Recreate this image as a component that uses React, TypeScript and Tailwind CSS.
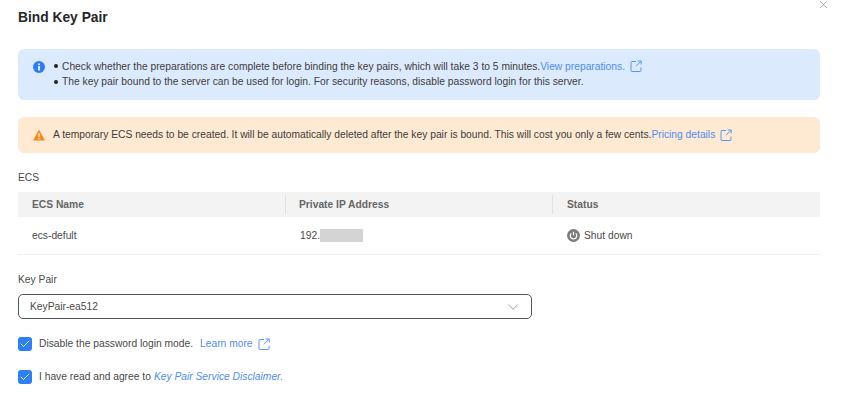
import React from 'react';
import { X, ChevronDown, Check } from 'lucide-react';

const ExternalIcon = ({ className = '' }: { className?: string }) => (
  <svg viewBox="0 0 12 12" width="12" height="12" fill="none" stroke="#5e94f5" strokeWidth="1" className={className}>
    <path d="M6 1.5H2a1 1 0 0 0-1 1v8a1 1 0 0 0 1 1h8a1 1 0 0 0 1-1V7.5" />
    <path d="M7.5 1H11.2V4.5" />
    <path d="M11 1.2 6 6.2" />
  </svg>
);

const CheckBox = () => (
  <span className="w-3.5 h-3.5 rounded-[3px] bg-[#2d7ff5] flex items-center justify-center shrink-0">
    <Check className="w-3 h-3 text-white" strokeWidth={2} />
  </span>
);

const App: React.FC = () => {
  return (
    <div className="relative w-[841px] h-[407px] overflow-hidden bg-white font-['Liberation_Sans',Arial,sans-serif] text-[10.28px] text-[#4a4a4a] pl-[18px] pr-[21px]">
      <X className="absolute right-[11px] -top-[2px] w-[13px] h-[13px] text-[#8f8f8f]" strokeWidth={1.25} />

      <h1 className="pt-[9px] h-[49px] text-[13.8px] leading-[17px] font-bold text-[#262626]">Bind Key Pair</h1>

      <div className="h-[51px] bg-[#dceafe] rounded-md flex items-start pl-[15px] pt-[9.5px]">
        <svg viewBox="0 0 12 12" width="12" height="12" className="shrink-0 mt-[2px]">
          <circle cx="6" cy="6" r="6" fill="#2f7df6" />
          <rect x="5.2" y="2.5" width="1.6" height="1.6" fill="#fff" />
          <rect x="5.2" y="5" width="1.6" height="4.5" fill="#fff" />
        </svg>
        <div className="ml-[9px] leading-[15.5px] text-[#3d3d3d]">
          <div className="flex items-center">
            <span className="w-1 h-1 rounded-full bg-[#222] mr-1" />
            Check whether the preparations are complete before binding the key pairs, which will take 3 to 5 minutes.
            <span className="text-[#4f8cf5]">View preparations.</span>
            <ExternalIcon className="ml-[5px]" />
          </div>
          <div className="flex items-center">
            <span className="w-1 h-1 rounded-full bg-[#222] mr-1" />
            The key pair bound to the server can be used for login. For security reasons, disable password login for this server.
          </div>
        </div>
      </div>

      <div className="mt-[17px] h-9 bg-[#fee9d2] rounded-md flex items-center pl-[15px] text-[#3d3d3d]">
        <svg viewBox="0 0 12 12" width="12" height="12" className="shrink-0">
          <path d="M6 .5 12 11.5H0Z" fill="#f58a1f" />
          <rect x="5.4" y="4.3" width="1.2" height="3.9" fill="#fff" />
          <rect x="5.4" y="9" width="1.2" height="1.2" fill="#fff" />
        </svg>
        <span className="ml-2">A temporary ECS needs to be created. It will be automatically deleted after the key pair is bound. This will cost you only a few cents.</span>
        <span className="text-[#4f8cf5]">Pricing details</span>
        <ExternalIcon className="ml-[5px]" />
      </div>

      <div className="mt-[18px] leading-[13px]">ECS</div>

      <div className="mt-2 h-[25px] bg-[#f3f3f3] grid grid-cols-[267px_267px_1fr] items-center font-bold text-[#666]">
        <div className="pl-[14px]">ECS Name</div>
        <div className="pl-[13px] border-l border-[#e2e2e2] leading-[19px]">Private IP Address</div>
        <div className="pl-[14px] border-l border-[#e2e2e2] leading-[19px]">Status</div>
      </div>
      <div className="h-[38px] pt-px border-b border-[#efefef] grid grid-cols-[267px_267px_1fr] items-center">
        <div className="pl-[14px]">ecs-defult</div>
        <div className="pl-[15px] flex items-center">
          192.
          <span className="w-[43px] h-[13px] bg-[#d4d4d4]" />
        </div>
        <div className="pl-[15px] flex items-center gap-[4px]">
          <svg viewBox="0 0 13 13" width="13" height="13" fill="none" className="shrink-0">
            <circle cx="6.5" cy="6.5" r="6.5" fill="#7d7d7d" />
            <path d="M4.3 4.4a3.2 3.2 0 1 0 4.4 0" stroke="#fff" strokeWidth="1.2" />
            <path d="M6.5 2.8v3.6" stroke="#fff" strokeWidth="1.2" />
          </svg>
          Shut down
        </div>
      </div>

      <div className="mt-[18px] leading-[13px]">Key Pair</div>

      <div className="mt-2 w-[514px] h-[25px] border border-[#555] rounded-[5px] flex items-center justify-between pl-[11px] pr-[9px]">
        KeyPair-ea512
        <ChevronDown className="w-[18px] h-[18px] text-[#777]" strokeWidth={1} />
      </div>

      <div className="mt-4 flex items-center h-[18px]">
        <CheckBox />
        <span className="ml-[7px]">Disable the password login mode.</span>
        <span className="ml-[7px] text-[#4f8cf5]">Learn more</span>
        <ExternalIcon className="ml-[5px]" />
      </div>

      <div className="mt-[15px] flex items-center h-[18px]">
        <CheckBox />
        <span className="ml-[7px]">I have read and agree to</span>
        <span className="ml-[3px] italic text-[#4f8cf5]">Key Pair Service Disclaimer.</span>
      </div>
    </div>
  );
};

export default App;
